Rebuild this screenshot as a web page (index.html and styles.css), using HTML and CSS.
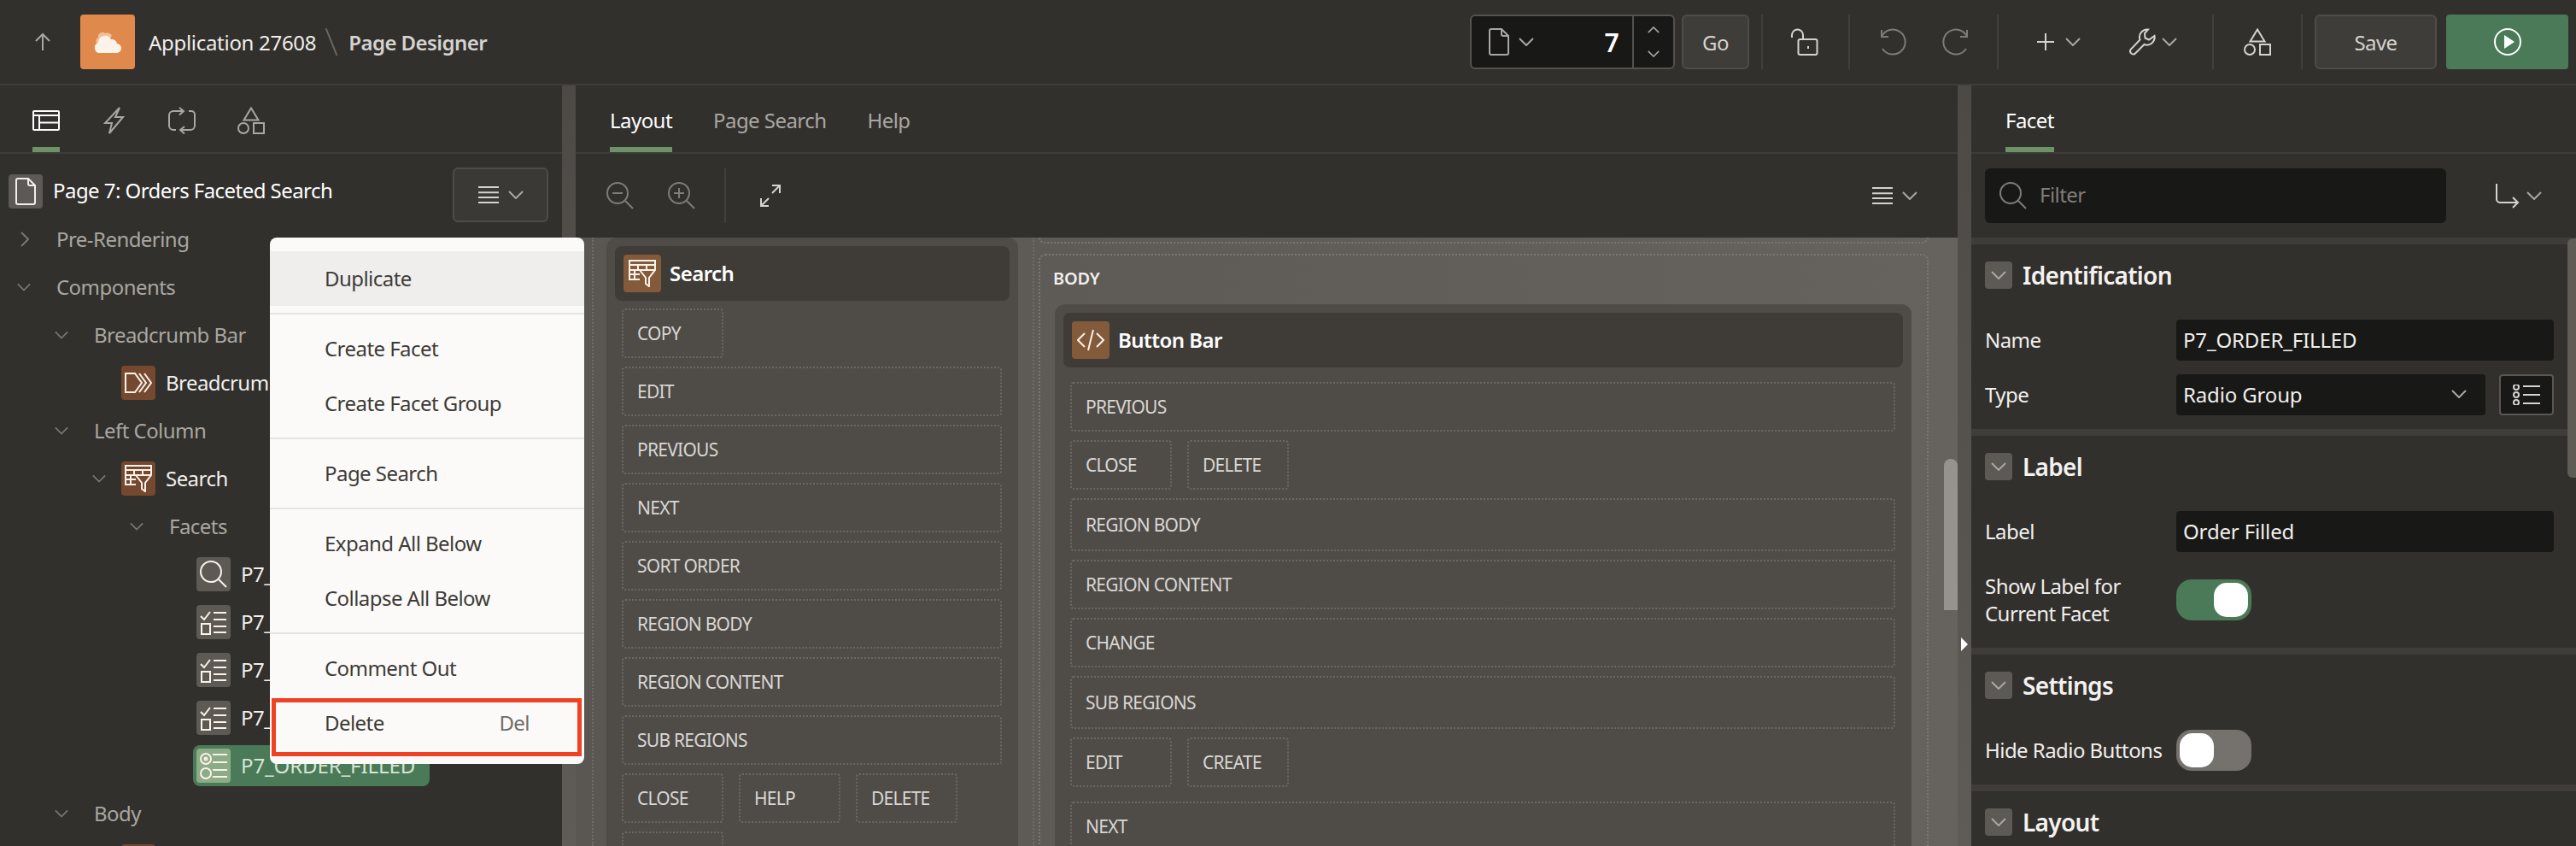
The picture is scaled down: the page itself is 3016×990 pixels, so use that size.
FILE: index.html
```html
<!DOCTYPE html>
<html lang="en">
<head>
    <meta charset="UTF-8">
    <meta name="viewport" content="width=device-width, initial-scale=1.0">
    <title>Page Designer</title>
    <link rel="stylesheet" href="styles.css">
</head>
<body>
    <!-- icon sprite -->
    <svg class="sprite" xmlns="http://www.w3.org/2000/svg">
        <symbol id="i-chev-d" viewBox="0 0 18 10"><path d="M1 1l8 8 8-8"/></symbol>
        <symbol id="i-chev-u" viewBox="0 0 18 10"><path d="M1 9l8-8 8 8"/></symbol>
        <symbol id="i-chev-r" viewBox="0 0 10 18"><path d="M1 1l8 8-8 8"/></symbol>
        <symbol id="i-page" viewBox="0 0 24 32"><path d="M3 1h12l8 8v20a2 2 0 0 1-2 2H3a2 2 0 0 1-2-2V3a2 2 0 0 1 2-2zM15 1v6a2 2 0 0 0 2 2h6"/></symbol>
        <symbol id="i-menu" viewBox="0 0 24 20"><path d="M0 1h24M0 7.300h24M0 13h24M0 19h24"/></symbol>
        <symbol id="i-shapes" viewBox="0 0 32 32"><path d="M16 1.500L24.500 15.500H7.500z"/><circle cx="7" cy="25" r="6"/><rect x="19" y="19" width="12" height="12"/></symbol>
        <symbol id="i-lock" viewBox="0 0 32 32"><path d="M1 11V8a6.500 6.500 0 0 1 13 0v5M20 21v3"/><rect x="8.500" y="13" width="22" height="18" rx="2"/></symbol>
        <symbol id="i-undo" viewBox="0 0 32 32"><path d="M2 2v8h8M2 10A14.500 14.500 0 1 1 3 24"/></symbol>
        <symbol id="i-redo" viewBox="0 0 32 32"><path d="M30 2v8h-8M30 10A14.500 14.500 0 1 0 29 24"/></symbol>
        <symbol id="i-plus" viewBox="0 0 22 22"><path d="M11 1v20M1 11h20"/></symbol>
        <symbol id="i-wrench" viewBox="0 0 32 32"><path d="M23 1.500a9 9 0 0 0-9.500 12L2.500 25a3.700 3.700 0 0 0 5 5l11-11a9 9 0 0 0 12-10l-6.500 4.500-4.500-2-.5-5.500z"/></symbol>
        <symbol id="i-layout" viewBox="0 0 32 24"><rect x="1" y="1" width="30" height="22" rx="1"/><path d="M1 6h30M8 6v17M8 14.500h23"/></symbol>
        <symbol id="i-bolt" viewBox="0 0 25 32"><path d="M19 1L2 19h8L7 31l16-19h-9z"/></symbol>
        <symbol id="i-loop" viewBox="0 0 32 32"><path d="M18 5H6a5 5 0 0 0-5 5v12a5 5 0 0 0 5 5h3M24 5h3a4 4 0 0 1 4 4v13a5 5 0 0 1-5 5H14M13 1l5 4-5 4.500M19 23l-5 4 5 4.500"/></symbol>
        <symbol id="i-search" viewBox="0 0 32 32"><circle cx="13" cy="13" r="12"/><path d="M22 22l9 9"/></symbol>
        <symbol id="i-zoom-out" viewBox="0 0 32 32"><circle cx="13" cy="13" r="12"/><path d="M22 22l9 9M7 13h12"/></symbol>
        <symbol id="i-zoom-in" viewBox="0 0 32 32"><circle cx="13" cy="13" r="12"/><path d="M22 22l9 9M7 13h12M13 7v12"/></symbol>
        <symbol id="i-expand" viewBox="0 0 26 28"><path d="M15 11l9-9M15 2h9v9M11 17l-9 9M2 17v9h9"/></symbol>
        <symbol id="i-goto" viewBox="0 0 28 30"><path d="M1 1v18a4 4 0 0 0 4 4h21M20 17l6 6-6 6"/></symbol>
        <symbol id="i-radio-list" viewBox="0 0 32 24"><circle cx="4" cy="3" r="3"/><circle cx="4" cy="12" r="3"/><circle cx="4" cy="21" r="3"/><path d="M12 2h20M12 12h20M12 22h20"/></symbol>
        <symbol id="i-crumb" viewBox="0 0 32 32"><path d="M1 5v22h11l8-11-8-11zM17 5l8 11-8 11M23 5l8 11-8 11"/></symbol>
        <symbol id="i-filter-table" viewBox="0 0 32 32"><path d="M13 23H1V1h30v10M1 6h30M1 12h12M1 17h12M11 6v6M21 6v6M7 12v11M13 12h18l-7 9v10l-4-3v-7z"/></symbol>
        <symbol id="i-check-list" viewBox="0 0 32 32"><path d="M1 9l4 4 7-9M16 5h15M16 13h15M16 21h15M16 28h15"/><rect x="2" y="18" width="10" height="12"/></symbol>
        <symbol id="i-radio-item" viewBox="0 0 32 32"><circle cx="7" cy="8" r="6"/><circle cx="7" cy="8" r="1.500"/><circle cx="7" cy="25" r="6"/><path d="M15 3h17M15 12h17M15 21h17M15 29h17"/></symbol>
        <symbol id="i-code" viewBox="0 0 32 32"><path d="M9 8l-8 8 8 8M23 8l8 8-8 8M19 4l-6 24"/></symbol>
    </svg>

    <header class="topbar">
        <svg class="ico ico-up" viewBox="0 0 18 20"><path d="M9 20V1M1 9l8-8 8 8"/></svg>
        <div class="app-logo">
            <svg class="cloud" viewBox="0 0 32 26">
                <path class="cloud-back" d="M3 15a5 5 0 0 1 2-7 5 5 0 0 1 8-5 6 6 0 0 1 8 3l-6 9z"/>
                <path class="cloud-front" d="M7 26a6 6 0 0 1-2-11.700A8 8 0 0 1 20 10a6 6 0 0 1 7 5 5.500 5.500 0 0 1-1 11z"/>
            </svg>
        </div>
        <span class="app-name">Application 27608</span>
        <span class="crumb-slash"></span>
        <span class="app-page">Page Designer</span>

        <div class="topbar-tools">
            <div class="page-picker">
                <svg class="ico ico-page"><use href="#i-page"/></svg>
                <svg class="ico chev"><use href="#i-chev-d"/></svg>
                <span class="page-num">7</span>
                <div class="page-spin">
                    <svg class="ico chev-sm"><use href="#i-chev-u"/></svg>
                    <svg class="ico chev-sm"><use href="#i-chev-d"/></svg>
                </div>
            </div>
            <button class="btn btn-go">Go</button>
            <span class="tb-sep tb-sep-first"></span>
            <div class="tb-btn"><svg class="ico ico-32 bright"><use href="#i-lock"/></svg></div>
            <span class="tb-sep"></span>
            <div class="tb-btn"><svg class="ico ico-32 dim"><use href="#i-undo"/></svg></div>
            <div class="tb-btn"><svg class="ico ico-32 dim"><use href="#i-redo"/></svg></div>
            <span class="tb-sep tb-sep-mid"></span>
            <div class="tb-btn wide">
                <svg class="ico ico-plus bright"><use href="#i-plus"/></svg>
                <svg class="ico chev bright"><use href="#i-chev-d"/></svg>
            </div>
            <div class="tb-btn wide tight">
                <svg class="ico ico-32 bright"><use href="#i-wrench"/></svg>
                <svg class="ico chev bright"><use href="#i-chev-d"/></svg>
            </div>
            <span class="tb-sep"></span>
            <div class="tb-btn"><svg class="ico ico-32 bright"><use href="#i-shapes"/></svg></div>
            <span class="tb-sep tb-sep-last"></span>
            <button class="btn btn-save">Save</button>
            <button class="btn btn-run">
                <svg class="run-icon" viewBox="0 0 32 32"><circle cx="16" cy="16" r="15"/><path d="M12 8l12 8-12 8z"/></svg>
            </button>
        </div>
    </header>

    <main class="workspace">
        <section class="left-pane">
            <div class="tabs tabs-icons">
                <div class="tab active"><svg class="ico ico-tab-layout"><use href="#i-layout"/></svg></div>
                <div class="tab"><svg class="ico ico-tab-bolt"><use href="#i-bolt"/></svg></div>
                <div class="tab"><svg class="ico ico-tab"><use href="#i-loop"/></svg></div>
                <div class="tab tab-shapes"><svg class="ico ico-tab"><use href="#i-shapes"/></svg></div>
            </div>

            <div class="page-row">
                <span class="node-icon icon-grey"><svg class="ico ico-node-page"><use href="#i-page"/></svg></span>
                <span class="page-title">Page 7: Orders Faceted Search</span>
                <button class="btn btn-tree-menu">
                    <svg class="ico ico-menu"><use href="#i-menu"/></svg>
                    <svg class="ico chev"><use href="#i-chev-d"/></svg>
                </button>
            </div>

            <ul class="tree">
                <li class="node d0"><span class="tw"><svg class="ico chev-right"><use href="#i-chev-r"/></svg></span>Pre-Rendering</li>
                <li class="node d0"><span class="tw"><svg class="ico chev-tree"><use href="#i-chev-d"/></svg></span>Components</li>
                <li class="node d1"><span class="tw"><svg class="ico chev-tree"><use href="#i-chev-d"/></svg></span>Breadcrumb Bar</li>
                <li class="node d2 leaf"><span class="tw"></span><span class="node-icon icon-brown"><svg class="ico ico-node"><use href="#i-crumb"/></svg></span>Breadcrumb</li>
                <li class="node d1"><span class="tw"><svg class="ico chev-tree"><use href="#i-chev-d"/></svg></span>Left Column</li>
                <li class="node d2 leaf"><span class="tw"><svg class="ico chev-tree"><use href="#i-chev-d"/></svg></span><span class="node-icon icon-brown"><svg class="ico ico-node"><use href="#i-filter-table"/></svg></span>Search</li>
                <li class="node d3"><span class="tw"><svg class="ico chev-tree"><use href="#i-chev-d"/></svg></span>Facets</li>
                <li class="node d4 leaf"><span class="tw"></span><span class="node-icon icon-grey"><svg class="ico ico-node"><use href="#i-search"/></svg></span>P7_</li>
                <li class="node d4 leaf"><span class="tw"></span><span class="node-icon icon-grey"><svg class="ico ico-node"><use href="#i-check-list"/></svg></span>P7_</li>
                <li class="node d4 leaf"><span class="tw"></span><span class="node-icon icon-grey"><svg class="ico ico-node"><use href="#i-check-list"/></svg></span>P7_</li>
                <li class="node d4 leaf"><span class="tw"></span><span class="node-icon icon-grey"><svg class="ico ico-node"><use href="#i-check-list"/></svg></span>P7_</li>
                <li class="node d4 leaf"><span class="tw"></span><span class="node-selected"><span class="node-icon icon-green"><svg class="ico ico-node"><use href="#i-radio-item"/></svg></span>P7_ORDER_FILLED</span></li>
                <li class="node d1"><span class="tw"><svg class="ico chev-tree"><use href="#i-chev-d"/></svg></span>Body</li>
                <li class="node d2 leaf"><span class="tw"></span><span class="node-icon icon-brown"></span></li>
            </ul>
        </section>

        <div class="splitter"></div>

        <section class="center-pane">
            <div class="tabs">
                <div class="tab active">Layout</div>
                <div class="tab">Page Search</div>
                <div class="tab">Help</div>
            </div>
            <div class="layout-toolbar">
                <svg class="ico ico-32 dim"><use href="#i-zoom-out"/></svg>
                <svg class="ico ico-32 dim"><use href="#i-zoom-in"/></svg>
                <span class="tb-sep"></span>
                <svg class="ico ico-expand bright"><use href="#i-expand"/></svg>
                <div class="layout-menu">
                    <svg class="ico ico-menu"><use href="#i-menu"/></svg>
                    <svg class="ico chev"><use href="#i-chev-d"/></svg>
                </div>
            </div>

            <div class="canvas">
                <div class="slot-left">
                    <div class="region">
                        <div class="region-head">
                            <span class="head-icon"><svg class="ico ico-node"><use href="#i-filter-table"/></svg></span>
                            Search
                        </div>
                        <div class="drop-list">
                            <div class="drop-row"><span class="drop">COPY</span></div>
                            <div class="drop full">EDIT</div>
                            <div class="drop full">PREVIOUS</div>
                            <div class="drop full">NEXT</div>
                            <div class="drop full">SORT ORDER</div>
                            <div class="drop full">REGION BODY</div>
                            <div class="drop full">REGION CONTENT</div>
                            <div class="drop full">SUB REGIONS</div>
                            <div class="drop-row">
                                <span class="drop">CLOSE</span>
                                <span class="drop">HELP</span>
                                <span class="drop">DELETE</span>
                            </div>
                            <div class="drop-row"><span class="drop">&nbsp;</span></div>
                        </div>
                    </div>
                </div>

                <div class="slot-right">
                    <div class="slot-prev"></div>
                    <div class="slot-body">
                        <div class="slot-title">BODY</div>
                        <div class="region">
                            <div class="region-head">
                                <span class="head-icon"><svg class="ico ico-node"><use href="#i-code"/></svg></span>
                                Button Bar
                            </div>
                            <div class="drop-list list-body">
                                <div class="drop full">PREVIOUS</div>
                                <div class="drop-row">
                                    <span class="drop">CLOSE</span>
                                    <span class="drop">DELETE</span>
                                </div>
                                <div class="drop full tall">REGION BODY</div>
                                <div class="drop full">REGION CONTENT</div>
                                <div class="drop full">CHANGE</div>
                                <div class="drop full tall">SUB REGIONS</div>
                                <div class="drop-row">
                                    <span class="drop">EDIT</span>
                                    <span class="drop">CREATE</span>
                                </div>
                                <div class="drop full drop-next">NEXT</div>
                            </div>
                        </div>
                    </div>
                </div>
            </div>
            <span class="scroll-center"></span>
        </section>

        <div class="splitter">
            <span class="split-arrow"></span>
        </div>

        <section class="right-pane">
            <div class="tabs">
                <div class="tab active">Facet</div>
            </div>
            <div class="filter-row">
                <div class="filter-box">
                    <svg class="ico ico-32 dim"><use href="#i-search"/></svg>
                    <span>Filter</span>
                </div>
                <div class="goto-btn">
                    <svg class="ico ico-goto bright"><use href="#i-goto"/></svg>
                    <svg class="ico chev bright"><use href="#i-chev-d"/></svg>
                </div>
            </div>

            <div class="prop-group">
                <h3 class="prop-head"><span class="prop-toggle"><svg class="ico chev"><use href="#i-chev-d"/></svg></span>Identification</h3>
                <div class="prop-row"><label>Name</label><div class="field">P7_ORDER_FILLED</div></div>
                <div class="prop-row">
                    <label>Type</label>
                    <div class="field field-select">Radio Group<svg class="ico chev"><use href="#i-chev-d"/></svg></div>
                    <div class="field-btn"><svg class="ico ico-radio-list"><use href="#i-radio-list"/></svg></div>
                </div>
            </div>

            <div class="prop-group">
                <h3 class="prop-head"><span class="prop-toggle"><svg class="ico chev"><use href="#i-chev-d"/></svg></span>Label</h3>
                <div class="prop-row"><label>Label</label><div class="field">Order Filled</div></div>
                <div class="prop-row prop-row-two">
                    <label>Show Label for<br>Current Facet</label>
                    <span class="switch on"><span class="knob"></span></span>
                </div>
            </div>

            <div class="prop-group">
                <h3 class="prop-head"><span class="prop-toggle"><svg class="ico chev"><use href="#i-chev-d"/></svg></span>Settings</h3>
                <div class="prop-row">
                    <label>Hide Radio Buttons</label>
                    <span class="switch"><span class="knob"></span></span>
                </div>
            </div>

            <div class="prop-group">
                <h3 class="prop-head"><span class="prop-toggle"><svg class="ico chev"><use href="#i-chev-d"/></svg></span>Layout</h3>
            </div>
            <span class="scroll-right"></span>
        </section>
    </main>

    <!-- context menu for the selected tree node -->
    <div class="context-menu">
        <div class="menu-item hover">Duplicate</div>
        <hr>
        <div class="menu-item">Create Facet</div>
        <div class="menu-item">Create Facet Group</div>
        <hr>
        <div class="menu-item">Page Search</div>
        <hr>
        <div class="menu-item">Expand All Below</div>
        <div class="menu-item">Collapse All Below</div>
        <hr>
        <div class="menu-item">Comment Out</div>
        <div class="menu-item">Delete<span class="menu-key">Del</span></div>
        <div class="menu-callout"></div>
    </div>
</body>
</html>
```

FILE: styles.css
```css
* {
    margin: 0;
    padding: 0;
    box-sizing: border-box;
}

body {
    position: relative;
    width: 3016px;
    height: 990px;
    overflow: hidden;
    background: #32302c;
    color: #f1efed;
    font-family: 'Noto Sans', 'Open Sans', sans-serif;
    font-size: 24px;
    letter-spacing: -0.55px;
}

button {
    font-family: inherit;
    letter-spacing: inherit;
    cursor: pointer;
}

.sprite {
    display: none;
}

/* icons */
.ico {
    fill: none;
    stroke: currentColor;
    stroke-width: 2;
    flex-shrink: 0;
    overflow: visible;
}

.ico-32 { width: 32px; height: 32px; }
.bright { color: #d5d3d0; }
.dim { color: #7f7c78; }
.chev { width: 18px; height: 10px; color: #a9a7a3; }
.chev-sm { width: 14px; height: 8px; color: #a9a7a3; }
.chev-tree { width: 16px; height: 10px; color: #7a7772; }
.chev-right { width: 10px; height: 18px; color: #7a7772; }
.ico-menu { width: 24px; height: 20px; color: #d5d3d0; }

/* top bar */
.topbar {
    display: flex;
    align-items: center;
    height: 100px;
    padding: 0 9px 0 41px;
    border-bottom: 2px solid #3f3d39;
}

.ico-up {
    width: 18px;
    height: 20px;
    color: #a9a7a3;
}

.app-logo {
    display: flex;
    align-items: center;
    justify-content: center;
    width: 64px;
    height: 64px;
    margin-left: 35px;
    border-radius: 4px;
    background: #df8a4c;
}

.cloud {
    width: 32px;
    height: 26px;
}

.cloud-back { fill: #f0c098; }
.cloud-front { fill: #fbf2e9; }

.app-name {
    margin-left: 16px;
    letter-spacing: -0.3px;
}

.crumb-slash {
    width: 2px;
    height: 34px;
    margin: 0 19px 0 17px;
    background: #6a6762;
    transform: rotate(-22deg);
}

.app-page {
    font-weight: 600;
    color: #d5d3d0;
}

.topbar-tools {
    display: flex;
    align-items: center;
    margin-left: auto;
}

.page-picker {
    display: flex;
    align-items: center;
    width: 240px;
    height: 64px;
    padding-left: 20px;
    border: 2px solid #55524e;
    border-radius: 6px;
    background: #181816;
}

.ico-page {
    width: 24px;
    height: 32px;
    color: #a9a7a3;
}

.page-picker .chev {
    margin-left: 11px;
}

.page-num {
    margin-left: auto;
    margin-right: 16px;
    font-size: 30px;
    font-weight: 600;
    color: #fff;
}

.page-spin {
    display: flex;
    flex-direction: column;
    align-items: center;
    justify-content: space-between;
    width: 48px;
    height: 60px;
    padding: 12px 0;
    border-left: 2px solid #55524e;
}

.btn {
    height: 64px;
    border: 2px solid #4f4c48;
    border-radius: 6px;
    background: #3f3d39;
    color: #d5d3d0;
    font-size: 24px;
}

.btn-go {
    width: 79px;
    margin-left: 8px;
}

.tb-sep {
    width: 2px;
    height: 64px;
    margin: 0 15px;
    background: #413f3b;
}

.tb-sep-first {
    margin: 0 13px 0 14px;
}

.tb-sep-mid {
    margin-left: 13px;
}

.tb-sep-last {
    margin-right: 14px;
}

.tb-btn {
    display: flex;
    align-items: center;
    justify-content: center;
    width: 72px;
    height: 64px;
}

.tb-btn.wide {
    gap: 12px;
    width: 110px;
}

.tb-btn.tight {
    gap: 7px;
}

.ico-plus {
    width: 22px;
    height: 22px;
}

.btn-save {
    width: 143px;
}

.btn-run {
    width: 143px;
    margin-left: 11px;
    border: none;
    border-radius: 4px;
    background: #4a7a58;
}

.run-icon {
    display: block;
    width: 32px;
    height: 32px;
    margin: 0 auto;
}

.run-icon circle {
    fill: none;
    stroke: #fff;
    stroke-width: 2;
}

.run-icon path {
    fill: #fff;
}

/* panes */
.workspace {
    display: flex;
    height: 890px;
    overflow: hidden;
}

.left-pane {
    width: 658px;
    overflow: hidden;
}

.center-pane {
    position: relative;
    display: flex;
    flex-direction: column;
    width: 1618px;
}

.right-pane {
    position: relative;
    width: 708px;
}

.splitter {
    position: relative;
    width: 16px;
    background: linear-gradient(180deg, #4d4a46 0%, #5f5b56 100%);
}

.split-arrow {
    position: absolute;
    top: 646px;
    left: 4px;
    border-top: 8px solid transparent;
    border-bottom: 8px solid transparent;
    border-left: 8px solid #fff;
}

/* tabs */
.tabs {
    display: flex;
    gap: 48px;
    height: 80px;
    padding-left: 40px;
    border-bottom: 2px solid #3f3d39;
}

.tabs-icons {
    gap: 51px;
    padding-left: 38px;
}

.tab {
    display: flex;
    align-items: center;
    height: 78px;
    padding-top: 8px;
    border-bottom: 6px solid transparent;
    color: #a9a7a3;
}

.tabs-icons .tab {
    padding-top: 10px;
}

.tab.active {
    border-bottom-color: #6e9268;
    color: #fff;
}

.tab-shapes {
    margin-left: -2px;
}

.ico-tab-layout {
    width: 32px;
    height: 24px;
}

.ico-tab-bolt {
    width: 25px;
    height: 32px;
}

.ico-tab {
    width: 32px;
    height: 32px;
}

/* left pane */
.page-row {
    display: flex;
    align-items: flex-start;
    height: 72px;
    padding: 16px 16px 0 10px;
}

.page-row .node-icon {
    margin-top: 8px;
}

.node-icon {
    display: flex;
    align-items: center;
    justify-content: center;
    width: 40px;
    height: 40px;
    margin-right: 12px;
    border-radius: 4px;
    flex-shrink: 0;
}

.icon-grey { background: #5d5a56; }
.icon-brown { background: #74492f; }
.icon-green { background: #8cab87; }

.ico-node-page {
    width: 24px;
    height: 32px;
    color: #f1efed;
}

.ico-node {
    width: 32px;
    height: 32px;
    color: #fbf2e9;
}

.page-title {
    margin-top: 8px;
    line-height: 38px;
    color: #fff;
}

.btn-tree-menu {
    display: flex;
    align-items: center;
    justify-content: center;
    gap: 11px;
    width: 112px;
    margin-left: auto;
    background: #3b3935;
}

.tree {
    list-style: none;
    color: #a9a7a3;
}

.node {
    display: flex;
    align-items: center;
    height: 56px;
    padding-bottom: 2px;
    white-space: nowrap;
}

.tree .node-icon,
.tw {
    margin-top: 2px;
}

.tw {
    display: flex;
    align-items: center;
    width: 46px;
    flex-shrink: 0;
}

.leaf .tw {
    width: 34px;
}

.leaf {
    color: #f1efed;
}

.d0 { padding-left: 20px; }
.d0 .chev-right { margin-left: 4px; }
.d1 { padding-left: 64px; }
.d2 { padding-left: 108px; }
.d3 { padding-left: 152px; }
.d4 { padding-left: 196px; }

.node-selected {
    display: flex;
    align-items: center;
    width: 277px;
    height: 48px;
    margin-top: 2px;
    margin-left: -4px;
    padding: 0 0 2px 4px;
    border-radius: 8px;
    background: #4a7a58;
    color: #d9e4d6;
    letter-spacing: -0.1px;
}

/* center pane */
.layout-toolbar {
    display: flex;
    align-items: center;
    gap: 40px;
    height: 98px;
    padding: 0 47px 0 36px;
}

.layout-toolbar .tb-sep {
    margin: 0 -1px 0 -6px;
}

.ico-expand {
    width: 26px;
    height: 28px;
}

.layout-menu {
    display: flex;
    align-items: center;
    gap: 11px;
    margin-left: auto;
}

.canvas {
    display: flex;
    flex: 1;
    min-height: 0;
    padding-left: 19px;
    overflow: hidden;
    background: linear-gradient(90deg, #5a5651 0%, #66625d 100%);
}

.slot-left {
    width: 518px;
    padding: 0 17px 0 15px;
    border-left: 2px dotted #6f6b66;
    border-right: 2px dotted #6f6b66;
}

.slot-right {
    width: 1042px;
    margin-left: 5px;
}

.slot-prev {
    height: 7px;
    border: 2px dotted #7a7671;
    border-top: none;
    border-radius: 0 0 8px 8px;
}

.slot-body {
    margin-top: 12px;
    padding: 13px 18px 0 17px;
    border: 2px dotted #7a7671;
    border-bottom: none;
    border-radius: 8px 8px 0 0;
}

.slot-title {
    margin: 0 0 16px -2px;
    font-size: 20px;
    line-height: 28px;
    font-weight: 600;
    letter-spacing: -0.2px;
    color: #f1efed;
}

.region {
    padding: 10px;
    border-radius: 12px 12px 0 0;
    background: #4f4b47;
}

.region-head {
    display: flex;
    align-items: center;
    gap: 10px;
    height: 64px;
    padding: 0 0 2px 10px;
    border-radius: 8px;
    background: #3f3c38;
    color: #fff;
    font-weight: 600;
}

.head-icon {
    display: flex;
    align-items: center;
    justify-content: center;
    width: 44px;
    height: 44px;
    margin-top: 2px;
    border-radius: 4px;
    background: #835a3a;
}

.drop-list {
    display: flex;
    flex-direction: column;
    gap: 10px;
    margin: 9px 9px 0 8px;
}

.list-body {
    margin-top: 17px;
}

.drop-row {
    display: flex;
    gap: 18px;
}

.drop {
    display: flex;
    align-items: center;
    width: 119px;
    height: 58px;
    padding-left: 16px;
    border: 2px dotted #6b6762;
    border-radius: 4px;
    font-size: 21px;
    letter-spacing: -0.75px;
    color: #d9d7d4;
}

.drop.full {
    width: auto;
}

.drop.tall {
    height: 62px;
}

.drop.drop-next {
    margin-top: 7px;
}

.scroll-center {
    position: absolute;
    top: 437px;
    right: 0;
    width: 16px;
    height: 177px;
    border-radius: 8px 8px 0 0;
    background: #96938f;
}

.scroll-right {
    position: absolute;
    top: 179px;
    right: 0;
    width: 10px;
    height: 280px;
    border-radius: 6px 0 0 6px;
    background: #5f5c58;
}

/* right pane */
.filter-row {
    display: flex;
    align-items: center;
    height: 98px;
    padding-left: 16px;
}

.filter-box {
    display: flex;
    align-items: center;
    gap: 15px;
    width: 540px;
    height: 64px;
    padding-left: 17px;
    border-radius: 6px;
    background: #181816;
    color: #807d79;
}

.filter-box span {
    padding-bottom: 4px;
}

.goto-btn {
    display: flex;
    align-items: center;
    gap: 8px;
    margin-left: 58px;
}

.ico-goto {
    width: 28px;
    height: 30px;
}

.prop-group {
    padding: 20px 26px 16px 16px;
    border-top: 8px solid #3f3c39;
}

.prop-head {
    display: flex;
    align-items: center;
    gap: 12px;
    height: 32px;
    margin-bottom: 36px;
    font-size: 28px;
    font-weight: 600;
    letter-spacing: -0.7px;
    color: #f4f2f0;
}

.prop-toggle {
    display: flex;
    align-items: center;
    justify-content: center;
    width: 32px;
    height: 32px;
    border-radius: 4px;
    background: #5d5a56;
}

.prop-row {
    display: flex;
    align-items: center;
    gap: 16px;
    min-height: 48px;
    margin-top: 16px;
}

.prop-row:first-of-type {
    margin-top: 0;
}

.prop-row label {
    width: 224px;
    margin-right: -16px;
    line-height: 32px;
    white-space: nowrap;
    color: #f1efed;
}

.prop-row-two {
    padding: 8px 0;
    margin-top: 16px;
}

.field {
    display: flex;
    align-items: center;
    flex: 1;
    height: 48px;
    padding: 0 0 2px 8px;
    border-radius: 4px;
    background: #181816;
    color: #f1efed;
    letter-spacing: -0.15px;
}

.field-select {
    justify-content: space-between;
    padding-right: 22px;
}

.field-btn {
    display: flex;
    align-items: center;
    justify-content: center;
    width: 64px;
    height: 48px;
    border: 2px solid #5a5752;
    border-radius: 4px;
    background: #181816;
}

.ico-radio-list {
    width: 32px;
    height: 24px;
    color: #d5d3d0;
}

.switch {
    display: flex;
    align-items: center;
    width: 88px;
    height: 48px;
    padding: 4px;
    border-radius: 18px;
    background: #75726d;
}

.switch.on {
    justify-content: flex-end;
    background: #4a7a58;
}

.knob {
    width: 40px;
    height: 40px;
    border-radius: 15px;
    background: #fff;
}

/* context menu */
.context-menu {
    position: absolute;
    top: 278px;
    left: 316px;
    width: 368px;
    padding: 16px 0;
    border-radius: 8px;
    background: #fbfaf8;
    color: #3d3b37;
}

.context-menu hr {
    height: 2px;
    margin: 8px 0;
    border: none;
    background: #e5e4e2;
}

.menu-item {
    display: flex;
    align-items: center;
    justify-content: space-between;
    height: 64px;
    padding: 0 64px 2px 64px;
}

.menu-item.hover {
    background: #efeeec;
}

.menu-key {
    color: #6f6c68;
}

.menu-callout {
    position: absolute;
    left: 2px;
    top: 539px;
    width: 363px;
    height: 68px;
    border: 5px solid #ef4123;
}
```
